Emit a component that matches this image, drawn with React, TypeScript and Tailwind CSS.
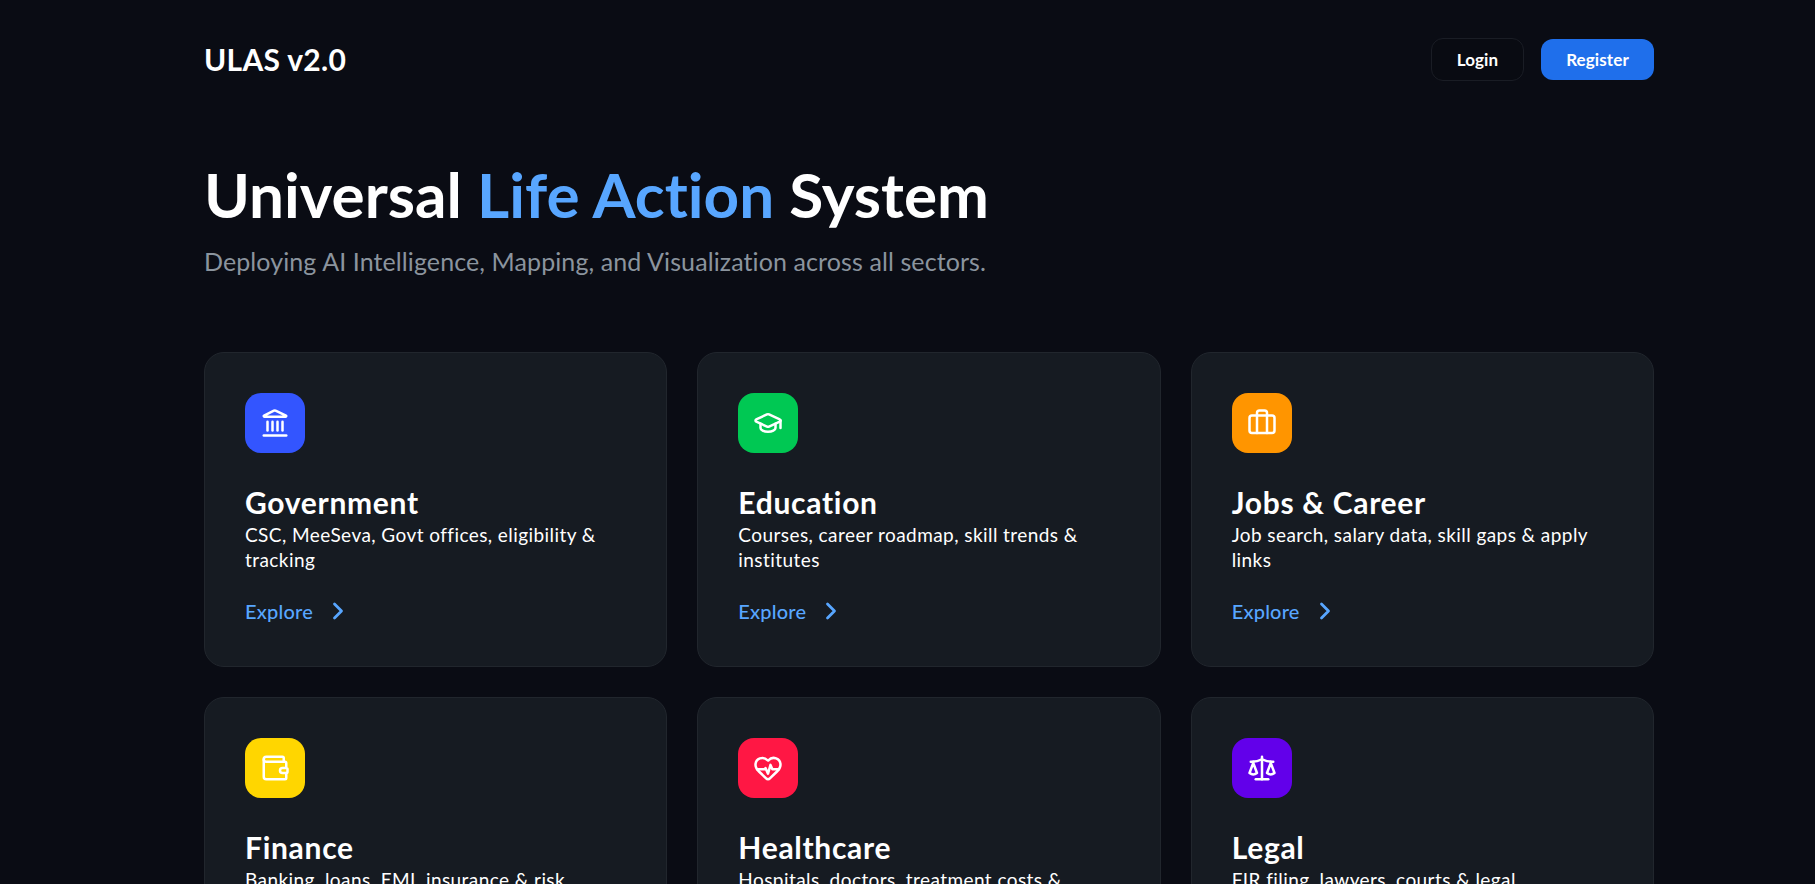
import { Landmark, GraduationCap, Briefcase, Wallet, HeartPulse, Scale, ChevronRight } from "lucide-react";

const cards = [
  { title: "Government", desc: "CSC, MeeSeva, Govt offices, eligibility & tracking", icon: Landmark, bg: "bg-[#3355ff]" },
  { title: "Education", desc: "Courses, career roadmap, skill trends & institutes", icon: GraduationCap, bg: "bg-[#00c853]" },
  { title: "Jobs & Career", desc: "Job search, salary data, skill gaps & apply links", icon: Briefcase, bg: "bg-[#ff9500]" },
  { title: "Finance", desc: "Banking, loans, EMI, insurance & risk", icon: Wallet, bg: "bg-[#ffd600]" },
  { title: "Healthcare", desc: "Hospitals, doctors, treatment costs &", icon: HeartPulse, bg: "bg-[#ff1744]" },
  { title: "Legal", desc: "FIR filing, lawyers, courts & legal", icon: Scale, bg: "bg-[#6200ea]" },
];

export default function App() {
  return (
    <div className="h-[884px] overflow-hidden bg-[#0a0c14] pl-[204px] pr-[161px] text-white font-['Lato','Liberation_Sans',sans-serif]">
      <header className="flex items-center justify-between pt-[38px]">
        <div className="text-[30px] font-bold leading-[43px] tracking-[0.3px]">ULAS v2.0</div>
        <div className="flex items-center gap-[17px]">
          <button className="h-[43px] w-[93px] rounded-xl border border-[#1a1d25] bg-[#090b12] text-[17px] font-bold tracking-[0.1px]">Login</button>
          <button className="h-[41px] w-[113px] rounded-xl bg-[#1f6feb] text-[17px] font-bold tracking-[0.1px]">Register</button>
        </div>
      </header>
      <section className="mt-[76px]">
        <h1 className="text-[62px] font-bold leading-[75px] tracking-[0.02px]">
          Universal <span className="text-[#58a6ff]">Life Action</span> System
        </h1>
        <p className="mt-[13px] text-[25px] leading-[32px] tracking-[0.1px] text-[#8b949e]">Deploying AI Intelligence, Mapping, and Visualization across all sectors.</p>
      </section>
      <main className="mt-[75px] grid grid-cols-3 gap-[30px]">
        {cards.map((c) => {
          const Icon = c.icon;
          return (
            <div key={c.title} className="flex h-[315px] flex-col rounded-[20px] border border-[#21262d] bg-[#161b22] p-10">
              <div className={`flex h-[60px] w-[60px] items-center justify-center rounded-2xl ${c.bg}`}>
                <Icon size={30} strokeWidth={2} color="white" />
              </div>
              <h3 className="mt-[31px] text-[30px] font-bold leading-[36px] tracking-[0.7px]">{c.title}</h3>
              <p className="mt-[2px] min-h-[50px] text-[19px] leading-[25px] tracking-[0.43px]">{c.desc}</p>
              <div className="mt-[25px] flex items-center gap-[11px] text-[20px] font-medium leading-[28px] tracking-[0.2px] text-[#58a6ff]">
                Explore <ChevronRight size={28} strokeWidth={2.4} />
              </div>
            </div>
          );
        })}
      </main>
    </div>
  );
}
